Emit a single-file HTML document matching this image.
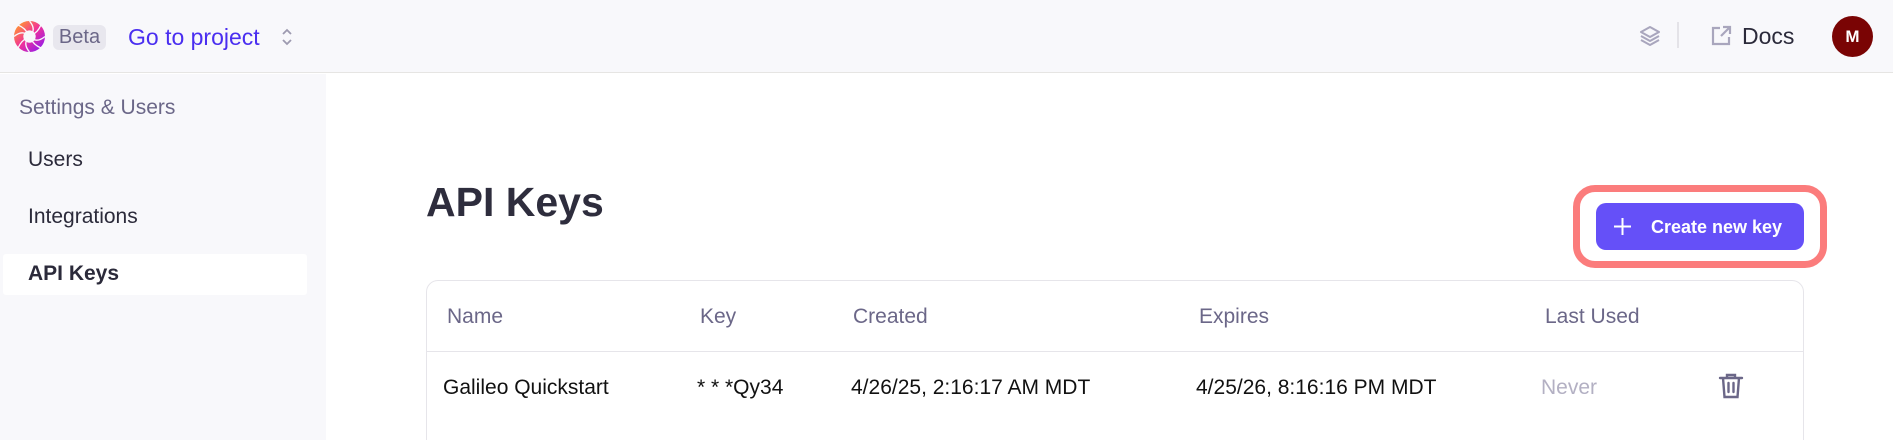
<!DOCTYPE html>
<html><head><meta charset="utf-8"><style>
*{margin:0;padding:0;box-sizing:border-box}
html,body{width:1893px;height:440px;overflow:hidden}
body{background:#fff;font-family:"Liberation Sans",sans-serif;position:relative}
.abs{position:absolute;white-space:nowrap}
.hdr{position:absolute;left:0;top:0;width:1893px;height:73px;background:#f8f8fb;border-bottom:1px solid #e6e5e3}
.side{position:absolute;left:0;top:74px;width:326px;height:366px;background:#f8f8fb}
.th{color:#6b6788;font-size:21px;top:305px}
.td{color:#111;font-size:21px;top:376px}
</style></head><body>
<div class="hdr"></div>
<svg class="abs" style="left:13px;top:20px" width="33" height="33" viewBox="0 0 32 32">
<defs><linearGradient id="g" x1="0" y1="0" x2="1" y2="1"><stop offset="0" stop-color="#ff8a3d"/><stop offset=".5" stop-color="#f0309a"/><stop offset="1" stop-color="#a020e0"/></linearGradient></defs>
<circle cx="16" cy="16" r="10.5" fill="none" stroke="url(#g)" stroke-width="9"/>
<circle cx="16" cy="16" r="4" fill="#f8f8fb"/>
<g stroke="#f8f8fb" stroke-width="1.3" fill="none">
<path d="M16 1 Q22 8 18 14 M31 16 Q24 22 18 18 M16 31 Q10 24 14 18 M1 16 Q8 10 14 14 M27 5 Q24 12 19 14 M27 27 Q20 24 18 19 M5 27 Q8 20 13 18 M5 5 Q12 8 14 13"/></g>
</svg>
<div class="abs" style="left:53px;top:25px;width:53px;height:25px;background:#e8e7ee;border-radius:6px;color:#6b6788;font-size:20px;line-height:25px;text-align:center">Beta</div>
<div class="abs" style="left:128px;top:22px;font-size:23px;color:#4a2ef0;line-height:30px">Go to project</div>
<svg class="abs" style="left:281px;top:27px" width="12" height="20" viewBox="0 0 12 20"><path d="M2 7l4-4 4 4M2 13l4 4 4-4" fill="none" stroke="#9d9ab0" stroke-width="1.8"/></svg>
<svg class="abs" style="left:1638px;top:24px" width="24" height="24" viewBox="0 0 24 24" fill="none" stroke="#a9a6bd" stroke-width="2" stroke-linejoin="round"><path d="M12 3l9 5-9 5-9-5z"/><path d="M3 12l9 5 9-5"/><path d="M3 16l9 5 9-5"/></svg>
<div class="abs" style="left:1677px;top:22px;width:2px;height:26px;background:#e4e3e8"></div>
<svg class="abs" style="left:1709px;top:24px" width="24" height="24" viewBox="0 0 24 24" fill="none" stroke="#a9a6bd" stroke-width="2.2"><path d="M11 4H4v16h16v-7"/><path d="M14 3h7v7M21 3l-9 9"/></svg>
<div class="abs" style="left:1742px;top:21px;font-size:23px;color:#2b2a3a;line-height:30px">Docs</div>
<div class="abs" style="left:1832px;top:16px;width:41px;height:41px;border-radius:50%;background:#7a0404;color:#fff;font-weight:bold;font-size:17px;line-height:41px;text-align:center">M</div>
<div class="side"></div>
<div class="abs" style="left:19px;top:96px;font-size:21px;color:#6b6788">Settings &amp; Users</div>
<div class="abs" style="left:28px;top:148px;font-size:21px;color:#2b2a3a">Users</div>
<div class="abs" style="left:28px;top:205px;font-size:21px;color:#2b2a3a">Integrations</div>
<div class="abs" style="left:3px;top:254px;width:304px;height:41px;background:#fff;border-radius:3px"></div>
<div class="abs" style="left:28px;top:262px;font-size:21px;color:#2b2a3a;font-weight:bold">API Keys</div>
<div class="abs" style="left:426px;top:179px;font-size:41px;font-weight:bold;color:#2e2d3d">API Keys</div>
<div class="abs" style="left:1573px;top:185px;width:254px;height:83px;border:7px solid #fb7c7c;border-radius:22px"></div>
<div class="abs" style="left:1596px;top:203px;width:208px;height:47px;background:#6550f8;border-radius:10px"></div>
<svg class="abs" style="left:1613px;top:217px" width="19" height="19" viewBox="0 0 19 19"><path d="M9.5 1v17M1 9.5h17" stroke="#fff" stroke-width="2"/></svg>
<div class="abs" style="left:1651px;top:217px;font-size:18px;font-weight:bold;color:#fff">Create new key</div>
<div class="abs" style="left:426px;top:280px;width:1378px;height:180px;border:1px solid #e6e5ea;border-radius:12px"></div>
<div class="abs" style="left:427px;top:351px;width:1376px;height:1px;background:#e6e5ea"></div>
<div class="abs th" style="left:447px">Name</div>
<div class="abs th" style="left:700px">Key</div>
<div class="abs th" style="left:853px">Created</div>
<div class="abs th" style="left:1199px">Expires</div>
<div class="abs th" style="left:1545px">Last Used</div>
<div class="abs td" style="left:443px">Galileo Quickstart</div>
<div class="abs td" style="left:697px">* * *Qy34</div>
<div class="abs td" style="left:851px">4/26/25, 2:16:17 AM MDT</div>
<div class="abs td" style="left:1196px">4/25/26, 8:16:16 PM MDT</div>
<div class="abs td" style="left:1541px;color:#b3b0c3">Never</div>
<svg class="abs" style="left:1718px;top:372px" width="26" height="28" viewBox="0 0 26 28" fill="none" stroke="#6b6788" stroke-width="2.4" stroke-linecap="round"><path d="M2 6h22M9 6V3h8v3M5 6l1.5 19h13L21 6M10.5 11v9M15.5 11v9"/></svg>
</body></html>
